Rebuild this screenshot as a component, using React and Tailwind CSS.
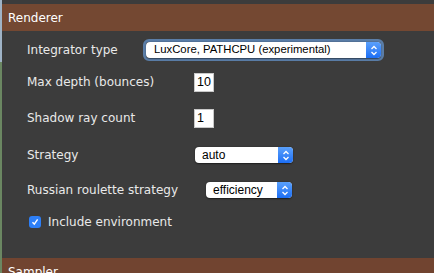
import React from "react";

const Stepper = ({ className }) => (
  <div
    className={`flex items-center justify-center rounded-r-[4px] bg-gradient-to-b from-[#5aa0fb] to-[#1b6ef5] ${className}`}
  >
    <svg width="8" height="11" viewBox="0 0 8 11" fill="none">
      <path d="M1.5 4 L4 1.5 L6.5 4" stroke="white" strokeWidth="1.3" />
      <path d="M1.5 7 L4 9.5 L6.5 7" stroke="white" strokeWidth="1.3" />
    </svg>
  </div>
);

const Select = ({ text, width, textClass = "text-[12px]", pl = "pl-[7px]" }) => (
  <div
    className={`flex h-[16px] items-stretch rounded-[4px] bg-white shadow-[0_0.5px_1.5px_rgba(0,0,0,0.5)] ${width}`}
  >
    <div
      className={`flex flex-1 items-center ${pl} ${textClass} leading-none text-black`}
      style={{ fontFamily: '"Liberation Sans", Arial, sans-serif' }}
    >
      {text}
    </div>
    <Stepper className="w-[15px]" />
  </div>
);

const NumBox = ({ value }) => (
  <div
    className="flex h-[19px] w-[20px] items-center border border-[#c9c9c9] bg-white pl-[2px] text-[12.5px] leading-none text-black"
    style={{ fontFamily: '"Liberation Sans", Arial, sans-serif' }}
  >
    {value}
  </div>
);

export default function App() {
  return (
    <div
      className="flex h-[273px] w-[434px] overflow-hidden bg-[#3c3c3c]"
      style={{ fontFamily: '"DejaVu Sans", Verdana, sans-serif' }}
    >
      <div className="flex w-[2px] shrink-0 flex-col">
        <div className="h-[62px] shrink-0 bg-[#9fb3c6]" />
        <div className="flex-1 bg-[#6b8762]" />
      </div>
      <div className="flex flex-1 flex-col overflow-hidden pt-[4px]">
        <div className="flex h-[27px] shrink-0 items-center bg-[#744832] pl-[6px] text-[12px] text-white">
          Renderer
        </div>
        <div className="flex shrink-0 flex-col pt-[5px] pl-[25px] text-[12px] text-[#e9e9e9]">
          <div className="flex h-[28px] items-center">
            <div className="w-[116px]">Integrator type</div>
            <div className="rounded-[6px] border-[3px] border-[#5b7ea8] p-0">
              <Select
                text="LuxCore, PATHCPU (experimental)"
                width="w-[235px]"
                textClass="text-[11.3px]"
                pl="pl-[8px]"
              />
            </div>
          </div>
          <div className="flex h-[36px] items-center">
            <div className="w-[167px]">Max depth (bounces)</div>
            <NumBox value="10" />
          </div>
          <div className="flex h-[36px] items-center">
            <div className="w-[167px]">Shadow ray count</div>
            <NumBox value="1" />
          </div>
          <div className="flex h-[38px] items-center">
            <div className="w-[168px]">Strategy</div>
            <Select text="auto" width="w-[98px]" />
          </div>
          <div className="flex h-[32px] items-center">
            <div className="w-[179px]">Russian roulette strategy</div>
            <Select text="efficiency" width="w-[86px]" />
          </div>
          <div className="flex h-[32px] items-center pl-[2px]">
            <div className="flex h-[12px] w-[12px] items-center justify-center rounded-[3px] bg-[#2d7ff7]">
              <svg width="8" height="8" viewBox="0 0 8 8" fill="none">
                <path d="M1.5 4.3 L3.3 6.2 L6.6 1.4" stroke="white" strokeWidth="1.4" />
              </svg>
            </div>
            <div className="ml-[7px]">Include environment</div>
          </div>
        </div>
        <div className="mt-[20px] flex h-[27px] shrink-0 items-center bg-[#714430] pl-[6px] text-[12px] text-white">
          Sampler
        </div>
      </div>
    </div>
  );
}
